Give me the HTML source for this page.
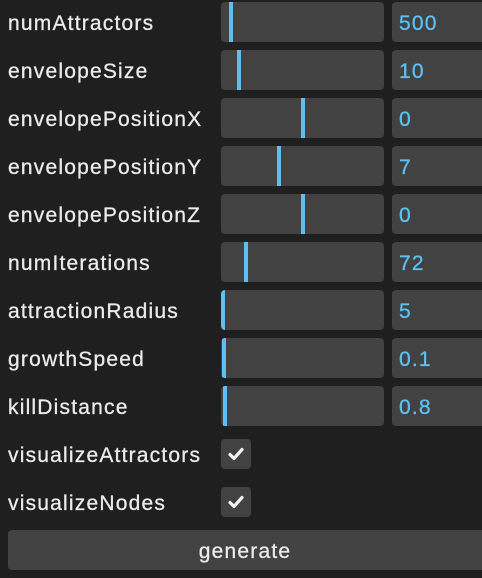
<!DOCTYPE html>
<html><head><style>
body{margin:0;background:#1f1f1f;width:482px;height:578px;overflow:hidden;font-family:"Liberation Sans",sans-serif;}
.r{position:absolute;left:0;width:482px;height:40px;}
.l{position:absolute;left:8px;top:2px;line-height:40px;font-size:21px;letter-spacing:1.2px;color:#ebebeb;-webkit-text-stroke:0.3px #ebebeb;}
.s{position:absolute;left:221px;width:163px;top:0;height:40px;background:#424242;border-radius:4px;overflow:hidden;}
.s i{position:absolute;top:0;height:40px;width:4px;background:#5cc0f6;}
.n{position:absolute;left:392px;width:100px;top:0;height:40px;background:#424242;border-radius:4px;color:#5cc0f6;font-size:21px;letter-spacing:1.2px;line-height:44px;padding-left:7px;box-sizing:border-box;-webkit-text-stroke:0.3px #5cc0f6;}
.c{position:absolute;left:221px;top:0;width:30px;height:30px;background:#424242;border-radius:4px;}
.b{position:absolute;left:8px;top:530px;width:480px;height:40px;background:#424242;border-radius:4px;color:#ebebeb;font-size:21px;letter-spacing:1.2px;line-height:44px;text-align:center;box-sizing:border-box;padding-right:6px;-webkit-text-stroke:0.3px #ebebeb;}
</style></head><body>
<div class="r" style="top:2px"><div class="l">numAttractors</div><div class="s"><i style="left:8px"></i></div><div class="n">500</div></div>
<div class="r" style="top:50px"><div class="l">envelopeSize</div><div class="s"><i style="left:16px"></i></div><div class="n">10</div></div>
<div class="r" style="top:98px"><div class="l">envelopePositionX</div><div class="s"><i style="left:80px"></i></div><div class="n">0</div></div>
<div class="r" style="top:146px"><div class="l">envelopePositionY</div><div class="s"><i style="left:56px"></i></div><div class="n">7</div></div>
<div class="r" style="top:194px"><div class="l">envelopePositionZ</div><div class="s"><i style="left:80px"></i></div><div class="n">0</div></div>
<div class="r" style="top:242px"><div class="l">numIterations</div><div class="s"><i style="left:23px"></i></div><div class="n">72</div></div>
<div class="r" style="top:290px"><div class="l">attractionRadius</div><div class="s"><i style="left:0px"></i></div><div class="n">5</div></div>
<div class="r" style="top:338px"><div class="l">growthSpeed</div><div class="s"><i style="left:1px"></i></div><div class="n">0.1</div></div>
<div class="r" style="top:386px"><div class="l">killDistance</div><div class="s"><i style="left:2px"></i></div><div class="n">0.8</div></div>
<div class="r" style="top:434px"><div class="l">visualizeAttractors</div><div class="c" style="top:5px"><svg width="30" height="30"><path d="M9 15.5l4 4 8-9" stroke="#f0f0f0" stroke-width="3.2" fill="none" stroke-linecap="round" stroke-linejoin="round"/></svg></div></div>
<div class="r" style="top:482px"><div class="l">visualizeNodes</div><div class="c" style="top:5px"><svg width="30" height="30"><path d="M9 15.5l4 4 8-9" stroke="#f0f0f0" stroke-width="3.2" fill="none" stroke-linecap="round" stroke-linejoin="round"/></svg></div></div>
<div class="b">generate</div>
</body></html>
